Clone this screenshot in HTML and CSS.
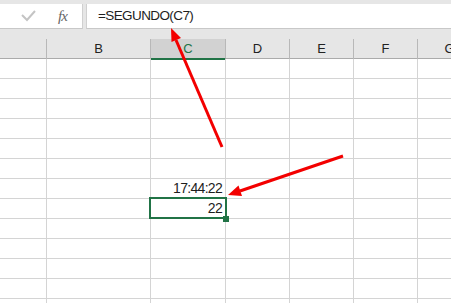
FILE: index.html
```html
<!DOCTYPE html>
<html>
<head>
	<title>SEGUNDO</title>
	<link rel="stylesheet" href="styles.css">
</head>
<body>
	<div class="bar">
		<div class="tools">
			<svg class="check" width="16" height="12" viewBox="0 0 16 12"><polyline points="1,5 6,10 14,1" fill="none" stroke="#c4c4c4" stroke-width="2"/></svg>
			<span class="fx">fx</span>
		</div>
		<div class="formula">=SEGUNDO(C7)</div>
	</div>
	<div class="sheet">
		<div class="row head">
			<div class="cell"></div>
			<div class="cell">B</div>
			<div class="cell active">C</div>
			<div class="cell">D</div>
			<div class="cell">E</div>
			<div class="cell">F</div>
			<div class="cell">G</div>
		</div>
		<div class="row"><div class="cell"></div><div class="cell"></div><div class="cell"></div><div class="cell"></div><div class="cell"></div><div class="cell"></div><div class="cell"></div></div>
		<div class="row"><div class="cell"></div><div class="cell"></div><div class="cell"></div><div class="cell"></div><div class="cell"></div><div class="cell"></div><div class="cell"></div></div>
		<div class="row"><div class="cell"></div><div class="cell"></div><div class="cell"></div><div class="cell"></div><div class="cell"></div><div class="cell"></div><div class="cell"></div></div>
		<div class="row"><div class="cell"></div><div class="cell"></div><div class="cell"></div><div class="cell"></div><div class="cell"></div><div class="cell"></div><div class="cell"></div></div>
		<div class="row"><div class="cell"></div><div class="cell"></div><div class="cell"></div><div class="cell"></div><div class="cell"></div><div class="cell"></div><div class="cell"></div></div>
		<div class="row"><div class="cell"></div><div class="cell"></div><div class="cell"></div><div class="cell"></div><div class="cell"></div><div class="cell"></div><div class="cell"></div></div>
		<div class="row"><div class="cell"></div><div class="cell"></div><div class="cell num">17:44:22</div><div class="cell"></div><div class="cell"></div><div class="cell"></div><div class="cell"></div></div>
		<div class="row"><div class="cell"></div><div class="cell"></div><div class="cell num selected">22</div><div class="cell"></div><div class="cell"></div><div class="cell"></div><div class="cell"></div></div>
		<div class="row"><div class="cell"></div><div class="cell"></div><div class="cell"></div><div class="cell"></div><div class="cell"></div><div class="cell"></div><div class="cell"></div></div>
		<div class="row"><div class="cell"></div><div class="cell"></div><div class="cell"></div><div class="cell"></div><div class="cell"></div><div class="cell"></div><div class="cell"></div></div>
		<div class="row"><div class="cell"></div><div class="cell"></div><div class="cell"></div><div class="cell"></div><div class="cell"></div><div class="cell"></div><div class="cell"></div></div>
		<div class="row"><div class="cell"></div><div class="cell"></div><div class="cell"></div><div class="cell"></div><div class="cell"></div><div class="cell"></div><div class="cell"></div></div>
		<div class="row"><div class="cell"></div><div class="cell"></div><div class="cell"></div><div class="cell"></div><div class="cell"></div><div class="cell"></div><div class="cell"></div></div>
	</div>
	<!-- setas vermelhas por cima da planilha -->
	<svg class="arrows" width="451" height="303" viewBox="0 0 451 303">
		<line x1="222" y1="147" x2="176" y2="40" stroke="#f30000" stroke-width="3"/>
		<polygon points="171,28 181,38 171.5,42" fill="#f30000"/>
		<line x1="343" y1="156" x2="240" y2="191" stroke="#f30000" stroke-width="3"/>
		<polygon points="228,195 238.5,185.5 242,196" fill="#f30000"/>
	</svg>
</body>
</html>
```

FILE: styles.css
```css
* {
	box-sizing: border-box;
}

body {
    margin: 0;
    width: 451px;
    height: 303px;
    overflow: hidden;
    position: relative;
    background-color: #fff;
    font-family: "Liberation Sans", Arial, sans-serif;
    color: #1e1e1e;
}

.bar {
    height: 39px;
    background-color: #e6e6e6;
    display: flex;
    gap: 3px;
    padding-top: 4px;
    align-items: flex-start;
}

.tools {
    width: 83px;
    height: 25px;
    background: #fff;
    border-right: 1px solid #d0d0d0;
    border-bottom: 1px solid #c8c8c8;
    display: flex;
    align-items: center;
}

.check {
    margin-left: 21px;
    margin-top: -1px;
}

.fx {
    margin-left: 21px;
    font-family: "Liberation Serif", serif;
    font-style: italic;
    font-size: 15px;
    color: #666;
    letter-spacing: -1px;
}

.formula {
    flex: 1;
    height: 25px;
    background: #fff;
    border-left: 1px solid #d0d0d0;
    border-bottom: 1px solid #c8c8c8;
    padding-left: 11px;
    font-size: 13.5px;
    letter-spacing: -0.6px;
    line-height: 24px;
    color: #1e1e1e;
}

.row {
    display: grid;
    grid-template-columns: 47px 104px 75px 64px 64px 64px 64px;
    height: 20px;
    border-bottom: 1px solid #d4d4d4;
}

.cell {
    border-right: 1px solid #d4d4d4;
    font-size: 14px;
    line-height: 19px;
    position: relative;
}

.head {
    background: #e6e6e6;
    border-bottom: 1px solid #ababab;
}

.head .cell {
    border-right-color: #b8b8b8;
    text-align: center;
    font-size: 13px;
    line-height: 19px;
    color: #222;
}

.head .active {
    background: #d2d2d2;
    color: #217346;
    border-bottom: 2px solid #217346;
    margin-bottom: -1px;
}

.num {
    text-align: right;
    padding-right: 3px;
    letter-spacing: -0.7px;
}

.selected::after {
    content: "";
    position: absolute;
    top: -2px;
    left: -2px;
    right: -2px;
    bottom: -1px;
    border: 2px solid #217346;
}

.selected::before {
    content: "";
    position: absolute;
    right: -4px;
    bottom: -4px;
    width: 6px;
    height: 6px;
    background: #217346;
    z-index: 1;
}

.arrows {
    position: absolute;
    left: 0;
    top: 0;
    pointer-events: none;
}
```
